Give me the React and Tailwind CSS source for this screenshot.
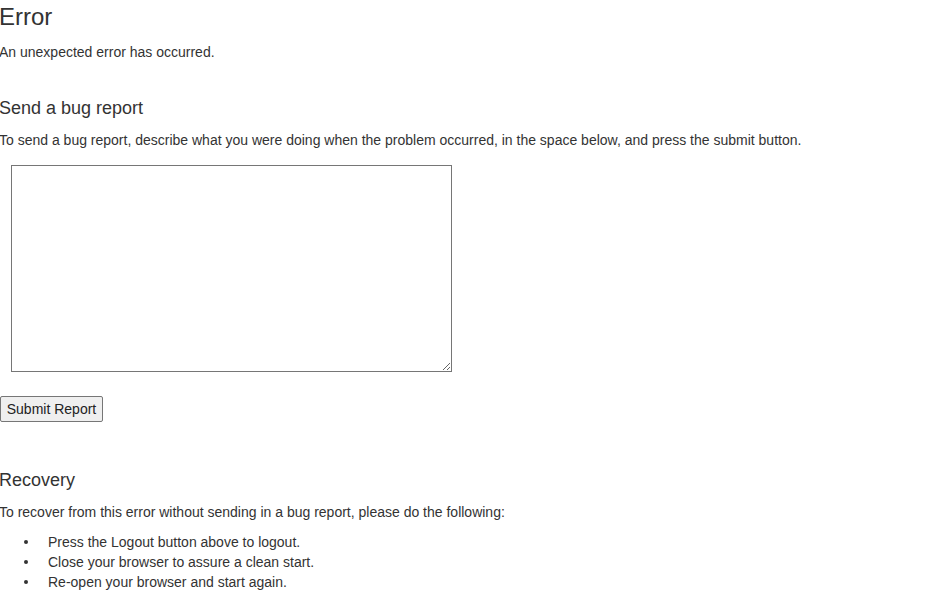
export default function App() {
  const steps = [
    'Press the Logout button above to logout.',
    'Close your browser to assure a clean start.',
    'Re-open your browser and start again.',
  ];

  return (
    <div className="min-h-screen bg-white font-['Liberation_Sans',Arial,sans-serif] text-[#333] text-[14px]">
      {/* Error */}
      <h1 className="pt-[3px] -ml-[1px] text-[24px] leading-[28px]">Error</h1>
      <p className="mt-[11px] -ml-[1px] leading-[20px]">An unexpected error has occurred.</p>

      {/* Bug report */}
      <h2 className="mt-[36px] -ml-[1px] text-[18px] leading-[20px]">Send a bug report</h2>
      <p className="mt-[12px] -ml-[1px] leading-[20px]">
        To send a bug report, describe what you were doing when the problem occurred, in the space below, and press the submit button.
      </p>
      <textarea className="mt-[15px] ml-[11px] block w-[441px] h-[207px] border border-[#767676] bg-white outline-none" />
      <button className="mt-[24px] block w-[103px] h-[26px] text-center border border-[#767676] rounded-[2px] bg-[#efefef] text-[14px] leading-[20px] text-[#222]">
        Submit Report
      </button>

      {/* Recovery */}
      <h2 className="mt-[48px] -ml-[1px] text-[18px] leading-[20px]">Recovery</h2>
      <p className="mt-[12px] -ml-[1px] leading-[20px]">
        To recover from this error without sending in a bug report, please do the following:
      </p>
      <ul className="mt-[10px]">
        {steps.map((s) => (
          <li key={s} className="flex items-center leading-[20px]">
            <span className="ml-[24px] mr-[20px] w-[4px] h-[4px] rounded-full bg-[#333]" />
            <span>{s}</span>
          </li>
        ))}
      </ul>
    </div>
  );
}
